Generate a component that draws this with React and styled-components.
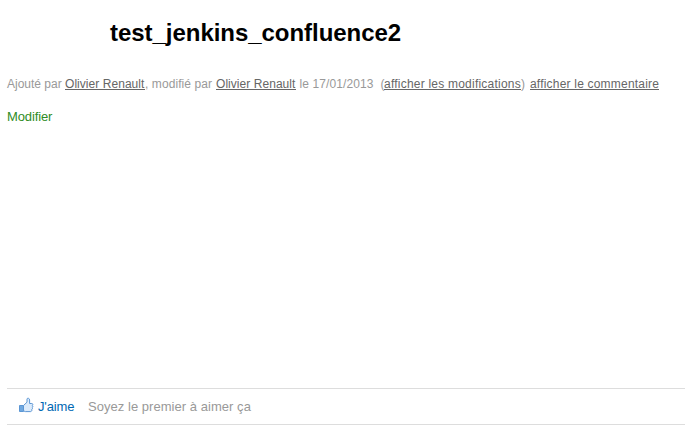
import React from 'react';
import styled, { createGlobalStyle } from 'styled-components';

const GlobalStyle = createGlobalStyle`
  * { box-sizing: border-box; }
  body { margin: 0; background: #fff; font-family: "Liberation Sans", Arial, sans-serif; overflow: hidden; }
`;

const Page = styled.main`
  display: flex;
  flex-direction: column;
  height: 433px;
  padding: 19px 0 8px 7px;
`;

const Title = styled.h1`
  margin: 0 0 0 103px;
  font-size: 24px;
  line-height: 28px;
  letter-spacing: -0.04px;
  color: #000;
`;

const Metadata = styled.div`
  display: flex;
  margin-top: 29px;
  font-size: 12px;
  line-height: 16px;
  color: #999;
  white-space: pre;
`;

const Segment = styled.span`
  flex: none;
  width: ${({ $width }) => $width}px;
  letter-spacing: ${({ $spacing = 0 }) => $spacing}px;
`;

const MetaLink = styled(Segment).attrs({ as: 'a', href: '#' })`
  height: 14px;
  line-height: 16px;
  color: #666;
  text-decoration: none;
  border-bottom: 1px solid #666;
`;

const EditLink = styled.a`
  align-self: flex-start;
  margin-top: 17px;
  font-size: 13px;
  line-height: 16px;
  letter-spacing: -0.13px;
  color: #2f8c25;
  text-decoration: none;
`;

const LikeBar = styled.section`
  display: flex;
  align-items: center;
  height: 37px;
  margin-top: auto;
  padding-left: 11px;
  border-top: 1px solid #ddd;
  border-bottom: 1px solid #ddd;
  font-size: 13px;
  line-height: 16px;
`;

const LikeButton = styled.a`
  display: flex;
  align-items: center;
  gap: 4px;
  width: 70px;
  letter-spacing: -0.15px;
  color: #0068b3;
  text-decoration: none;
`;

const LikeSummary = styled.span`
  letter-spacing: 0.04px;
  color: #999;
`;

const ThumbIcon = styled.svg`
  flex: none;
  width: 16px;
  height: 16px;
  margin-top: -4px;
`;

export default function App() {
  return (
    <>
      <GlobalStyle />
      <Page>
        <Title>test_jenkins_confluence2</Title>
        <Metadata>
          <Segment $width={58}>Ajouté par </Segment>
          <MetaLink $width={80} $spacing={0.05}>Olivier Renault</MetaLink>
          <Segment $width={71} $spacing={0.08}>, modifié par </Segment>
          <MetaLink $width={80} $spacing={0.05}>Olivier Renault</MetaLink>
          <Segment $width={88} $spacing={0.11}>{' le 17/01/2013  ('}</Segment>
          <MetaLink $width={137} $spacing={0.22}>afficher les modifications</MetaLink>
          <Segment $width={9}>)</Segment>
          <MetaLink $width={129} $spacing={0.2}>afficher le commentaire</MetaLink>
        </Metadata>
        <EditLink href="#">Modifier</EditLink>
        <LikeBar>
          <LikeButton href="#">
            <ThumbIcon viewBox="0 0 16 16" aria-hidden="true">
              <path d="M1.5 8.5h4v6h-4z" fill="#6fa8e0" stroke="#5b96d4" />
              <path d="M5.5 8.5 9 5.2V2.1c0-1.3 2.6-1.2 2.6.8v3.6h2.2c1.2 0 1.3 1.5.5 2 .8.5.6 1.6-.1 1.9.6.6.3 1.6-.4 1.9.4.9-.2 2.3-1.2 2.3H7.3l-1.8-.8z" fill="#dcebfb" stroke="#5b96d4" strokeLinejoin="round" />
            </ThumbIcon>
            J'aime
          </LikeButton>
          <LikeSummary>Soyez le premier à aimer ça</LikeSummary>
        </LikeBar>
      </Page>
    </>
  );
}
